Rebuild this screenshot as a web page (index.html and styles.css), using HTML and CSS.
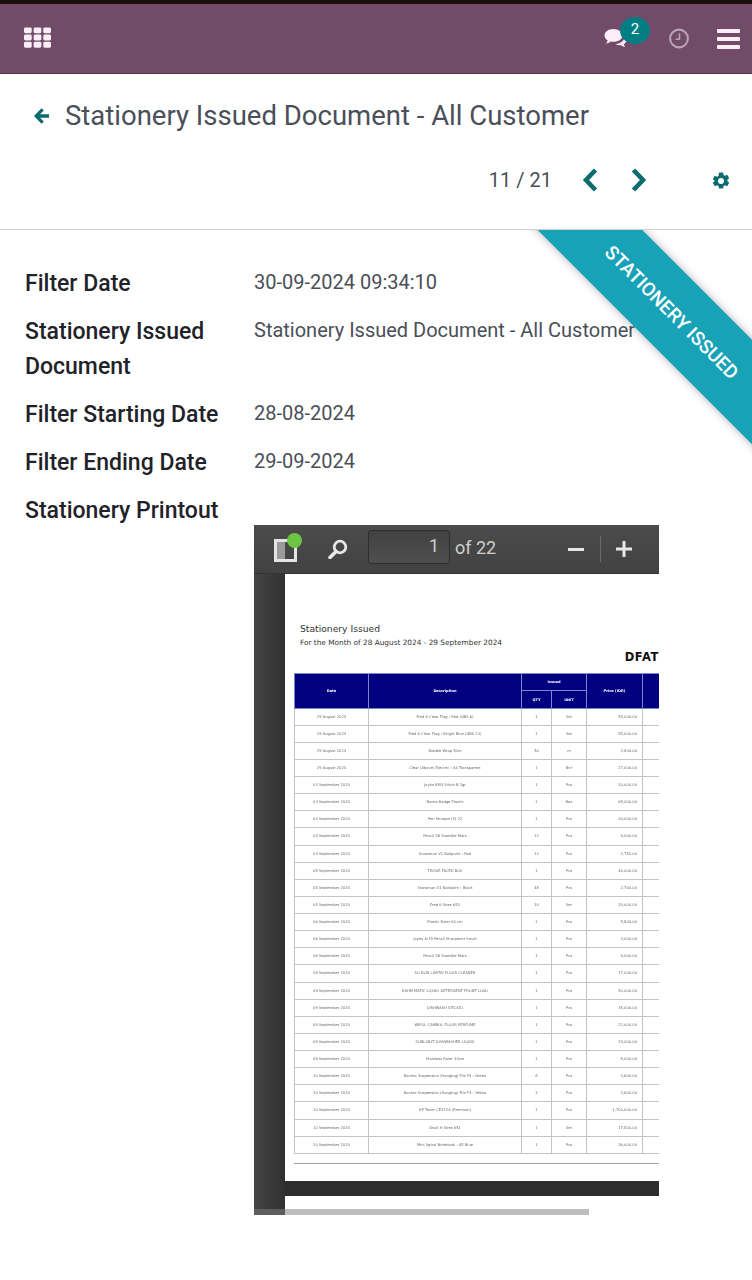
FILE: index.html
```html
<!DOCTYPE html>
<html lang="en">
<head>
<meta charset="utf-8">
<title>Stationery Issued Document</title>
<link rel="stylesheet" href="styles.css">
</head>
<body>
<div class="statusbar"></div>
<nav class="navbar">
  <svg class="apps" width="27" height="21" viewBox="0 0 28 21"><g fill="#fbeef8"><rect x="0" y="0" width="8" height="6" rx="1.5"/><rect x="10" y="0" width="8" height="6" rx="1.5"/><rect x="20" y="0" width="8" height="6" rx="1.5"/><rect x="0" y="7.5" width="8" height="6" rx="1.5"/><rect x="10" y="7.5" width="8" height="6" rx="1.5"/><rect x="20" y="7.5" width="8" height="6" rx="1.5"/><rect x="0" y="15" width="8" height="6" rx="1.5"/><rect x="10" y="15" width="8" height="6" rx="1.5"/><rect x="20" y="15" width="8" height="6" rx="1.5"/></g></svg>
  <div class="nav-right">
    <div class="chat">
      <svg width="24" height="20" viewBox="0 0 24 20"><path fill="#fbeef8" d="M9.5 1C4.5 1 .5 3.9.5 7.5c0 2 1.3 3.8 3.2 5-.3 1.2-1 2.3-1.9 3.1 1.900-.2 3.600-1 4.900-2.100.9.2 1.800.3 2.800.3 5 0 9-2.900 9-6.300S14.500 1 9.500 1z"/><path fill="#fbeef8" d="M20.500 8.500c.2 3.800-3.600 7-8.900 7.500 1.500 1 3.300 1.300 5 1.100 1.300 1 2.900 1.700 4.800 1.900-.8-.7-1.400-1.600-1.700-2.700 1.700-1 2.800-2.500 2.800-4.100 0-1.400-.8-2.700-2-3.700z"/></svg>
      <span class="badge">2</span>
    </div>
    <svg class="clock" width="22" height="21" viewBox="0 0 22 22"><circle cx="11" cy="11" r="9.300" fill="none" stroke="#b9a3b4" stroke-width="2.200"/><path d="M11.500 5.500v6.200H7.500" fill="none" stroke="#b9a3b4" stroke-width="1.600"/></svg>
    <svg class="burger" width="23" height="20" viewBox="0 0 23 20"><g fill="#fbeef8"><rect width="23" height="4" rx=".8"/><rect y="8" width="23" height="4" rx=".8"/><rect y="16" width="23" height="4" rx=".8"/></g></svg>
  </div>
</nav>

<header class="control">
  <div class="breadcrumb">
    <svg class="back" width="17" height="18" viewBox="0 0 18 18"><path fill="#0b6b6f" d="M9 .8 1 9l8 8.200 2.400-2.400-3.900-3.900H17V7.100H7.500l3.900-3.900z"/></svg>
    <h1 class="title">Stationery Issued Document - All Customer</h1>
  </div>
  <div class="pager">
    <span class="count">11 / 21</span>
    <svg class="prev" width="16" height="24" viewBox="0 0 16 24"><path fill="none" stroke="#0b6b6f" stroke-width="4.600" d="M13.500 2 4 12l9.500 10"/></svg>
    <svg class="next" width="16" height="24" viewBox="0 0 16 24"><path fill="none" stroke="#0b6b6f" stroke-width="4.600" d="M2.500 2 12 12 2.500 22"/></svg>
    <svg class="gear" width="18" height="18" viewBox="0 0 18 18"><path fill="#0b6b6f" fill-rule="evenodd" d="M7 .5h4l.5 2.400 1.500.8 2.200-1 2 3.500-1.800 1.500v1.600l1.800 1.500-2 3.500-2.200-1-1.500.8-.5 2.400H7l-.5-2.400-1.500-.8-2.200 1-2-3.500 1.800-1.500V8.700L.8 7.200l2-3.500 2.200 1 1.500-.8zM9 6a3 3 0 1 0 0 6 3 3 0 0 0 0-6z"/></svg>
  </div>
</header>

<main class="sheet">
  <div class="ribbon"><span>STATIONERY ISSUED</span></div>
  <div class="field"><div class="label">Filter Date</div><div class="value">30-09-2024 09:34:10</div></div>
  <div class="field"><div class="label">Stationery Issued Document</div><div class="value">Stationery Issued Document - All Customer</div></div>
  <div class="field"><div class="label">Filter Starting Date</div><div class="value">28-08-2024</div></div>
  <div class="field"><div class="label">Filter Ending Date</div><div class="value">29-09-2024</div></div>
  <div class="field"><div class="label">Stationery Printout</div><div class="value"></div></div>

  <section class="viewer">
    <div class="toolbar">
      <div class="sidebar-toggle">
        <svg width="24" height="24" viewBox="0 0 24 24"><rect x="1.500" y="2.500" width="20" height="20" fill="none" stroke="#e4e4e4" stroke-width="3"/><rect x="3" y="4" width="8" height="17" fill="#9a9a9a"/></svg>
        <span class="dot"></span>
      </div>
      <svg class="search" width="20" height="20" viewBox="0 0 20 20"><circle cx="12" cy="8" r="5.800" fill="none" stroke="#e8e8e8" stroke-width="2.800"/><path d="M8 12.500 2 18.500" stroke="#e8e8e8" stroke-width="3.600" stroke-linecap="round"/></svg>
      <div class="page-input">1</div>
      <span class="page-total">of 22</span>
      <div class="zoom">
        <span class="minus"></span>
        <span class="sep"></span>
        <svg width="16" height="16" viewBox="0 0 16 16"><path d="M8 0v16M0 8h16" stroke="#e6e6e6" stroke-width="3"/></svg>
      </div>
    </div>
    <div class="viewer-body">
      <div class="rail"></div>
      <div class="pages">
        <div class="page">
          <div class="doc-title">Stationery Issued</div>
          <div class="doc-sub">For the Month of 28 August 2024 - 29 September 2024</div>
          <div class="doc-org">DFAT</div>
          <table class="doc-table">
            <colgroup><col class="c1"><col class="c2"><col class="c3"><col class="c4"><col class="c5"><col class="c6"></colgroup>
            <thead>
              <tr class="h1"><th rowspan="2">Date</th><th rowspan="2">Description</th><th colspan="2">Issued</th><th rowspan="2">Price (IDR)</th><th rowspan="2"></th></tr>
              <tr class="h2"><th>QTY</th><th>UNIT</th></tr>
            </thead>
            <tbody>
              <tr><td>29 August 2024</td><td>Fred 6 Clear Flag - Red (GBS 6)</td><td>1</td><td>Set</td><td class="num">55,000.00</td><td></td></tr>
              <tr><td>29 August 2024</td><td>Fred 6 Clear Flag - Bright Blue (GBS 23)</td><td>1</td><td>Set</td><td class="num">55,000.00</td><td></td></tr>
              <tr><td>29 August 2024</td><td>Bubble Wrap 50m</td><td>50</td><td>m</td><td class="num">3,800.00</td><td></td></tr>
              <tr><td>29 August 2024</td><td>Clear (Above) Electric - A4 Transparent</td><td>1</td><td>Bnr</td><td class="num">27,000.00</td><td></td></tr>
              <tr><td>03 September 2024</td><td>Joyko KM3 Stitch B 2gr</td><td>1</td><td>Pcs</td><td class="num">10,000.00</td><td></td></tr>
              <tr><td>03 September 2024</td><td>Name Badge Plastic</td><td>1</td><td>Box</td><td class="num">65,000.00</td><td></td></tr>
              <tr><td>03 September 2024</td><td>Pen Sharpie (S) 22</td><td>1</td><td>Pcs</td><td class="num">30,000.00</td><td></td></tr>
              <tr><td>04 September 2024</td><td>Pencil 2B Staedler Mars</td><td>12</td><td>Pcs</td><td class="num">9,000.00</td><td></td></tr>
              <tr><td>04 September 2024</td><td>Snowman V1 Ballpoint - Red</td><td>12</td><td>Pcs</td><td class="num">2,750.00</td><td></td></tr>
              <tr><td>05 September 2024</td><td>TISSUE FACED BOX</td><td>1</td><td>Pcs</td><td class="num">40,000.00</td><td></td></tr>
              <tr><td>05 September 2024</td><td>Snowman V1 Ballpoint - Black</td><td>48</td><td>Pcs</td><td class="num">2,700.00</td><td></td></tr>
              <tr><td>05 September 2024</td><td>Fred 6 Sires 653</td><td>10</td><td>Set</td><td class="num">24,000.00</td><td></td></tr>
              <tr><td>06 September 2024</td><td>Plastic Ruler 60 cm</td><td>1</td><td>Pcs</td><td class="num">5,800.00</td><td></td></tr>
              <tr><td>06 September 2024</td><td>Joyko A-19 Pencil Sharpener Small</td><td>1</td><td>Pcs</td><td class="num">3,000.00</td><td></td></tr>
              <tr><td>06 September 2024</td><td>Pencil 2B Staedler Mars</td><td>1</td><td>Pcs</td><td class="num">9,000.00</td><td></td></tr>
              <tr><td>09 September 2024</td><td>SO KLIN LANTAI FLOOR CLEANER</td><td>1</td><td>Pcs</td><td class="num">17,000.00</td><td></td></tr>
              <tr><td>09 September 2024</td><td>KAHM MATIC LIQUID DETERGENT FRONT LOAD</td><td>1</td><td>Pcs</td><td class="num">50,000.00</td><td></td></tr>
              <tr><td>09 September 2024</td><td>DISHWASH SITOCID</td><td>1</td><td>Pcs</td><td class="num">35,000.00</td><td></td></tr>
              <tr><td>09 September 2024</td><td>WIPOL CAMBOL FLOOR PERFUME</td><td>1</td><td>Pcs</td><td class="num">22,000.00</td><td></td></tr>
              <tr><td>09 September 2024</td><td>SUNLIGHT DISHWASHER LIQUID</td><td>1</td><td>Pcs</td><td class="num">24,000.00</td><td></td></tr>
              <tr><td>09 September 2024</td><td>Stainless Ruler 30cm</td><td>1</td><td>Pcs</td><td class="num">8,000.00</td><td></td></tr>
              <tr><td>10 September 2024</td><td>Bantex Suspension (Hanging) File F4 - Green</td><td>8</td><td>Pcs</td><td class="num">3,600.00</td><td></td></tr>
              <tr><td>10 September 2024</td><td>Bantex Suspension (Hanging) File F4 - Yellow</td><td>3</td><td>Pcs</td><td class="num">3,600.00</td><td></td></tr>
              <tr><td>10 September 2024</td><td>HP Toner CE312A (Premium)</td><td>1</td><td>Pcs</td><td class="num">1,700,000.00</td><td></td></tr>
              <tr><td>10 September 2024</td><td>Gnali H Sires 651</td><td>1</td><td>Set</td><td class="num">17,500.00</td><td></td></tr>
              <tr><td>20 September 2024</td><td>Mini Spiral Notebook - A5 Blue</td><td>1</td><td>Pcs</td><td class="num">26,000.00</td><td></td></tr>
            </tbody>
          </table>
          <div class="doc-rule"></div>
        </div>
        <div class="page-gap"></div>
        <div class="page-next"></div>
      </div>
    </div>
    <div class="hscroll"><span class="hscroll-corner"></span><span class="hscroll-thumb"></span></div>
  </section>
</main>
</body>
</html>
```

FILE: styles.css
```css
* { box-sizing: border-box; }
html, body { margin: 0; padding: 0; }
body {
  width: 752px;
  height: 1280px;
  overflow: hidden;
  background: #fff;
  font-family: Roboto, "Liberation Sans", sans-serif;
  color: #4a4f57;
}

.statusbar { height: 4px; background: #1b100c; }

.navbar {
  height: 70px;
  background: #714b67;
  border-bottom: 1px solid #4a3344;
  display: flex;
  align-items: center;
  justify-content: space-between;
  padding: 0 12px 0 24px;
}
.apps { display: block; margin-top: -2px; }
.nav-right { display: flex; align-items: center; }
.chat { position: relative; width: 24px; height: 20px; margin-right: 40px; margin-top: -2px; }
.chat svg { display: block; }
.badge {
  position: absolute;
  left: 16px;
  top: -11px;
  width: 30px;
  height: 27px;
  border-radius: 50%;
  background: #017e84;
  color: #fff;
  font-size: 15px;
  line-height: 24px;
  text-align: center;
}
.clock { display: block; margin-right: 27px; }
.burger { display: block; }

.control {
  height: 156px;
  border-bottom: 1px solid #cfcfcf;
  padding: 0 22px 0 33px;
}
.breadcrumb { display: flex; align-items: center; padding-top: 25px; }
.back { display: block; margin-right: 15px; }
.title {
  margin: 0;
  font-size: 27.500px;
  font-weight: 400;
  line-height: 34px;
  color: #4a4f5a;
  white-space: nowrap;
}
.pager { display: flex; align-items: center; justify-content: flex-end; margin-top: 33px; }
.count { font-size: 20px; line-height: 28px; color: #4a4f57; margin-right: 30px; }
.prev { margin-right: 33px; }
.next { margin-right: 65px; }
.gear { margin-top: 2px; }

.sheet { position: relative; height: 1050px; overflow: hidden; padding: 36px 0 0 25px; }
.ribbon {
  position: absolute;
  left: 492px;
  top: 45px;
  width: 360px;
  height: 74px;
  transform: rotate(45deg);
  background: #17a2b8;
  color: #fff;
  box-shadow: 0 0 10px rgba(0, 0, 0, .3);
  display: flex;
  align-items: center;
  justify-content: center;
  font-size: 19px;
  font-weight: 500;
}

.field { display: flex; margin-bottom: 13px; line-height: 35px; }
.label { width: 229px; flex: none; font-size: 23px; font-weight: 500; color: #1f2329; padding-right: 20px; }
.value { font-size: 20px; line-height: 33px; color: #4a4f57; white-space: nowrap; }

.viewer { width: 405px; margin: -16px 0 0 229px; height: 690px; display: flex; flex-direction: column; overflow: hidden; }
.toolbar {
  height: 49px;
  flex: none;
  background: linear-gradient(#4b4b4b, #424242);
  border-bottom: 1px solid #333;
  display: flex;
  align-items: center;
  padding-left: 20px;
  color: #e0e0e0;
}
.sidebar-toggle { position: relative; width: 24px; height: 24px; margin-right: 30px; margin-top: 1px; }
.sidebar-toggle svg { display: block; }
.dot { position: absolute; left: 13px; top: -5px; width: 15px; height: 15px; border-radius: 50%; background: #6cc644; }
.search { display: block; margin-right: 20px; flex: none; }
.page-input {
  width: 82px;
  height: 34px;
  background: linear-gradient(#424242, #4e4e4e);
  border: 1px solid #2e2e2e;
  border-radius: 3px;
  font-size: 18px;
  line-height: 30px;
  text-align: right;
  padding-right: 10px;
  color: #cfcfcf;
  margin-top: -4px;
}
.page-total { font-size: 18px; margin-left: 5px; color: #cfcfcf; margin-top: -4px; }
.zoom { display: flex; align-items: center; margin-left: 72px; }
.minus { width: 16px; height: 3px; background: #e6e6e6; }
.sep { width: 1px; height: 26px; background: #6a6a6a; margin: 0 15px 0 16px; }
.zoom svg { display: block; }

.viewer-body { flex: 1; display: flex; min-height: 0; }
.rail { width: 31px; flex: none; background: linear-gradient(90deg, #454545, #303030); }
.pages { flex: 1; min-width: 0; overflow: hidden; background: #fff; display: flex; flex-direction: column; }
.page { flex: none; height: 607px; padding: 49px 0 0 15px; overflow: hidden; font-family: "DejaVu Sans", sans-serif; color: #222; }
.doc-title { font-size: 9.200px; line-height: 11px; color: #333; }
.doc-sub { font-size: 7.350px; line-height: 10px; margin-top: 4px; color: #333; }
.doc-org { font-size: 11.500px; font-weight: 700; letter-spacing: .6px; line-height: 13px; text-align: right; margin-top: 3px; color: #111; }
.doc-table { margin: 9px 0 0 -6px; border-collapse: collapse; table-layout: fixed; width: 380px; filter: blur(.35px); }
.c1 { width: 74px; } .c2 { width: 153px; } .c3 { width: 30px; } .c4 { width: 35px; } .c5 { width: 56px; } .c6 { width: 32px; }
.doc-table th {
  background: #000080;
  color: #fff;
  font-size: 3.600px;
  font-weight: 700;
  border: 1px solid #7d86c9;
  padding: 0;
  text-align: center;
}
.h1 { height: 17px; }
.h2 { height: 18px; }
.doc-table td {
  height: 17px;
  padding: 0;
  font-size: 3.700px;
  line-height: 5px;
  text-align: center;
  color: #666;
  border: 1px solid #c4c4c4;
}
.doc-table tbody tr:nth-child(8n) td { height: 18px; }
.doc-table td.num { text-align: right; padding-right: 5px; }
.doc-rule { height: 1px; background: #a3a3a3; margin: 9px 0 0 -6px; }
.page-gap { height: 15px; background: #2d2d2d; }
.page-next { height: 13px; }

.hscroll { height: 6px; flex: none; display: flex; }
.hscroll-corner { width: 31px; background: #5e5e5e; }
.hscroll-thumb { width: 304px; background: #bdbdbd; }
```
